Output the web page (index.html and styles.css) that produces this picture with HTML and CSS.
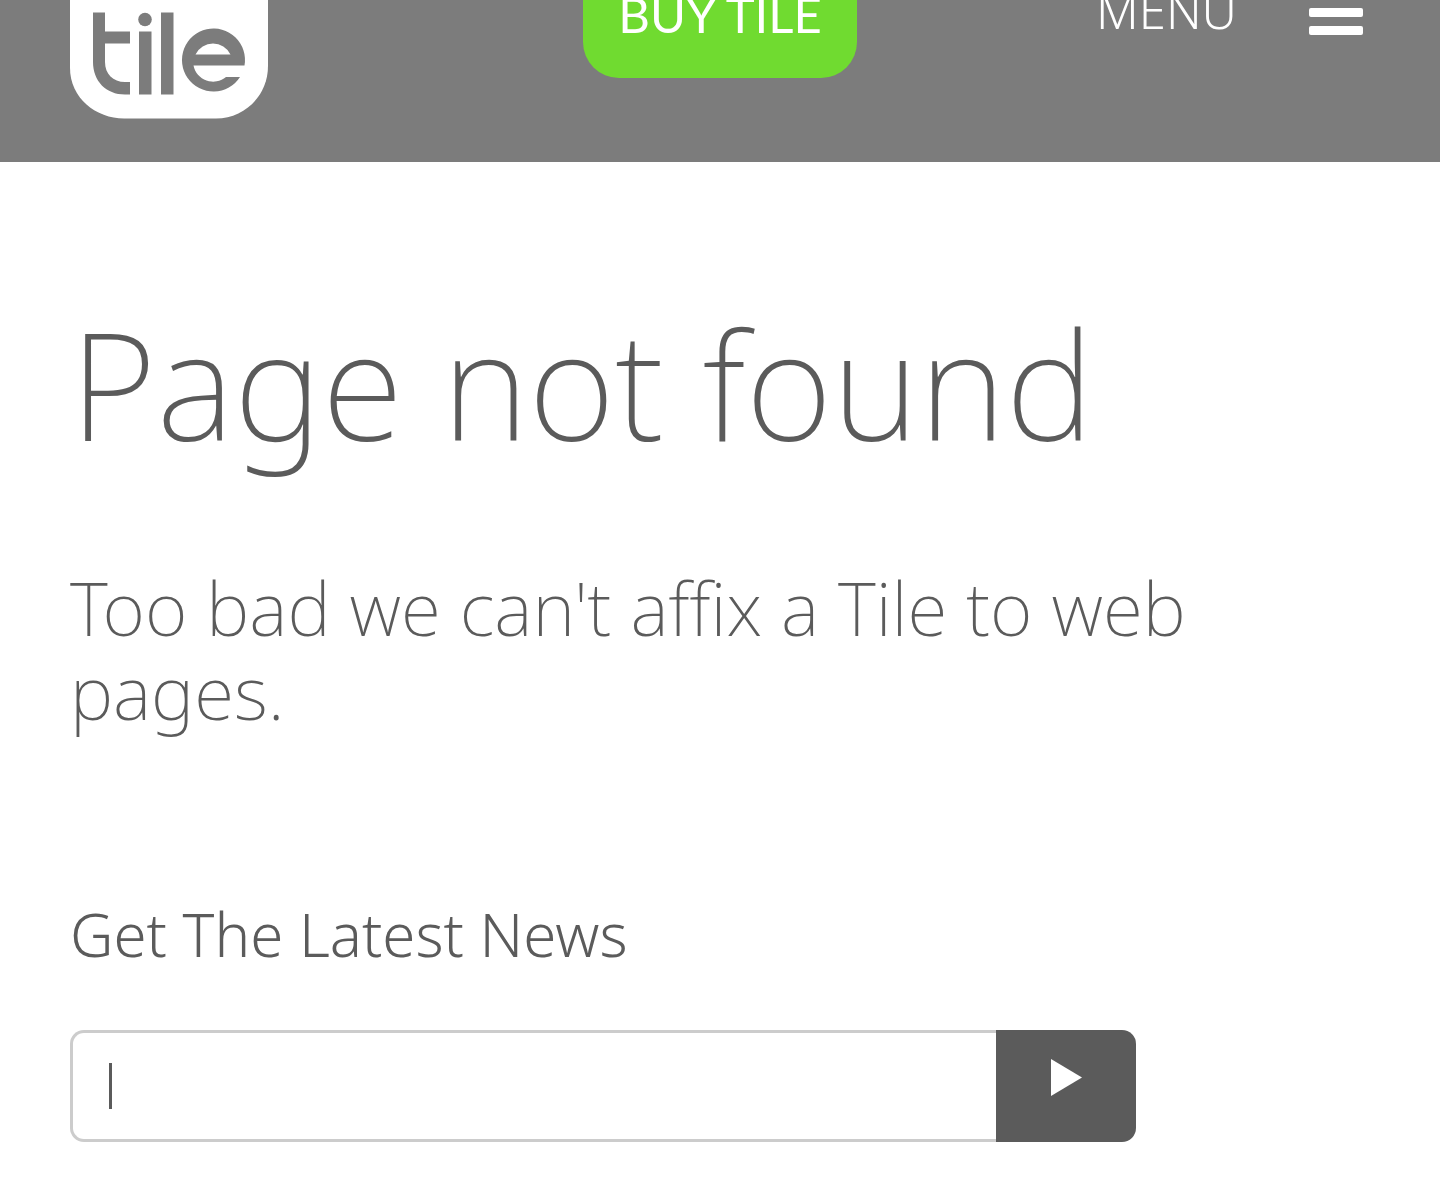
FILE: index.html
```html
<!DOCTYPE html>
<html lang="en">
<head>
    <meta charset="UTF-8">
    <meta name="viewport" content="width=device-width, initial-scale=1.0">
    <title>Page not found</title>

    <link rel="stylesheet" href="styles.css">
</head>
<body>
    <header class="header">
        <a class="logo" href="#" aria-label="tile">
            <svg width="198" height="119" viewBox="0 0 198 119">
                <path fill="#fff" d="M0 0H198V66C198 96 174 118.500 146 118.500H54C26 118.500 0 98 0 68Z"/>
                <g fill="#7c7c7c">
                    <path d="M23 12.500H35V31.500H60V43.500H35V62C35 74 43 82 55 82H60V94.500H55C36 94.500 23 81 23 62Z"/>
                    <circle cx="75" cy="19.500" r="6.800"/>
                    <rect x="69" y="31.500" width="12.500" height="63"/>
                    <rect x="91" y="12.500" width="12.500" height="82"/>
                    <path fill-rule="evenodd" d="M174.500 65.500A31.500 31.500 0 1 0 170 77H156A20 20 0 0 1 123.500 65.500ZM125.500 54.500A19.500 19.500 0 0 1 160.500 54.500Z"/>
                </g>
            </svg>
        </a>
        <a class="buy" href="#">BUY TILE</a>
        <button class="menu" type="button">
            MENU
            <svg class="menu-icon" width="54" height="36" viewBox="0 0 54 36">
                <g fill="#fff">
                    <rect y="8" width="54" height="9" rx="2"/>
                    <rect y="26" width="54" height="9" rx="2"/>
                </g>
            </svg>
        </button>
    </header>

    <main class="content">
        <h1>Page not found</h1>
        <p class="message">Too bad we can't affix a Tile to web pages.</p>

        <form class="news">
            <label for="email">Get The Latest News</label>
            <div class="news-row">
                <input type="email" name="email" id="email">
                <button type="submit" aria-label="Subscribe">
                    <svg width="31" height="37" viewBox="0 0 31 37"><path fill="#fff" d="M0 0L31 18.500L0 37Z"/></svg>
                </button>
            </div>
        </form>
    </main>
</body>
</html>
```
FILE: styles.css
```css
* {
    box-sizing: border-box;
}

body {
    margin: 0;
    background: #fff;
    color: #5b5b5b;
    font-family: "Noto Sans", "Open Sans", sans-serif;
    font-weight: 200;
}

/* Header */
.header {
    display: grid;
    grid-template-columns: 1fr auto 1fr;
    align-items: start;
    height: 162px;
    padding: 0 70px;
    background: #7c7c7c;
}

.logo svg {
    display: block;
}

.buy {
    padding: 0 35px 50px;
    border-radius: 0 0 36px 36px;
    background: #70db30;
    color: #fff;
    font-family: Lato, sans-serif;
    font-size: 49px;
    font-weight: 400;
    line-height: 28px;
    text-decoration: none;
}

.menu {
    display: flex;
    justify-content: flex-end;
    gap: 72px;
    padding: 0 7px 0 0;
    border: none;
    background: none;
    color: #fff;
    font: inherit;
    font-size: 49px;
    font-weight: 300;
    line-height: 20px;
}

/* Content */
.content {
    padding: 132px 70px 58px;
}

h1 {
    margin: 0;
    font-size: 149px;
    font-weight: 200;
    line-height: 180px;
}

.message {
    margin: 92px 0 0;
    font-size: 73px;
    line-height: 84px;
}

/* Newsletter */
.news {
    margin-top: 164px;
}

.news label {
    display: block;
    font-size: 60px;
    font-weight: 350;
    line-height: 72px;
}

.news-row {
    display: flex;
    width: 82%;
    height: 112px;
    margin-top: 60px;
}

.news input {
    flex: 1;
    min-width: 0;
    padding: 0 36px;
    border: 3px solid #ccc;
    border-right: none;
    border-radius: 14px 0 0 14px;
    outline: none;
    background: linear-gradient(#5b5b5b, #5b5b5b) 36px center / 3px 46px no-repeat;
    color: #5b5b5b;
    font: inherit;
    font-size: 40px;
}

.news button {
    width: 140px;
    padding: 0 0 14px;
    border: none;
    border-radius: 0 14px 14px 0;
    background: #5b5b5b;
}
```
